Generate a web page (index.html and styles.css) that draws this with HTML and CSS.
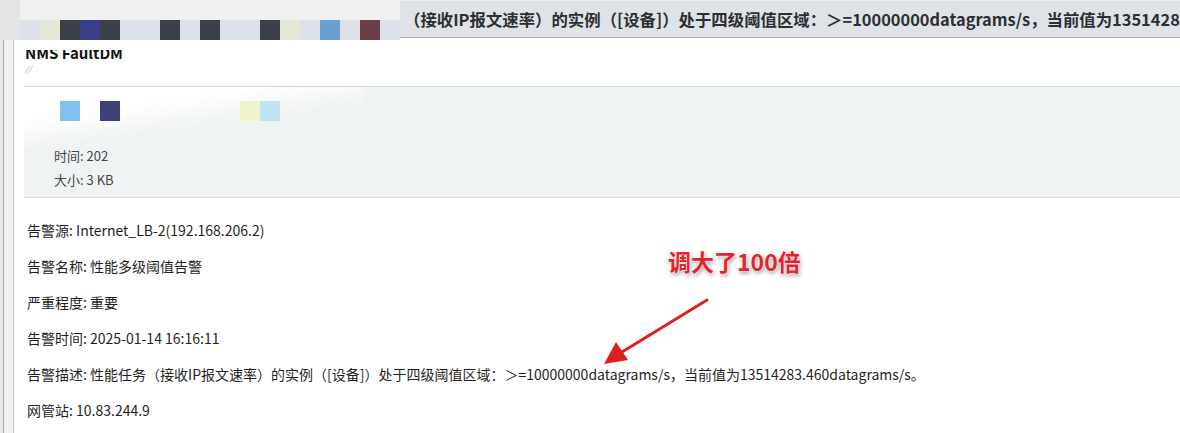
FILE: index.html
```html
<!DOCTYPE html>
<html lang="zh-CN">
<head>
    <meta charset="UTF-8">
    <meta name="viewport" content="width=device-width, initial-scale=1.0">
    <title>NMS FaultDM</title>
    <link rel="stylesheet" href="styles.css">
</head>
<body>
    <div class="topbar">
        <div class="blur">
            <div class="blur-top"></div>
            <div class="mosaic">
                <span class="c-grey"></span><span class="c-light"></span><span class="c-pale"></span>
                <span class="c-dark"></span><span class="c-navy"></span><span class="c-dark"></span>
                <span class="c-light"></span><span class="c-light"></span><span class="c-dark"></span>
                <span class="c-light"></span><span class="c-dark"></span><span class="c-light"></span>
                <span class="c-light"></span><span class="c-dark"></span><span class="c-pale"></span>
                <span class="c-light"></span><span class="c-blue"></span><span class="c-light"></span>
                <span class="c-maroon"></span><span class="c-light"></span>
            </div>
        </div>
        <div class="subject">（接收IP报文速率）的实例（[设备]）处于四级阈值区域：＞=10000000datagrams/s，当前值为13514283.460datagrams/s。</div>
    </div>

    <div class="frame">
        <div class="edge"></div>
        <div class="mail">
            <div class="mail-head">
                <div class="sender-clip">
                    <div class="sender">NMS FaultDM</div>
                </div>
                <div class="to">//</div>
            </div>

            <div class="attach">
                <div class="mosaic small">
                    <span></span><span class="c-sky"></span><span></span><span class="c-indigo"></span>
                    <span></span><span></span><span></span><span></span><span></span><span></span>
                    <span class="c-cream"></span><span class="c-ice"></span>
                </div>
                <div class="meta">时间: 202</div>
                <div class="meta">大小: 3 KB</div>
            </div>

            <div class="fields">
                <p>告警源: Internet_LB-2(192.168.206.2)</p>
                <p>告警名称: 性能多级阈值告警</p>
                <p>严重程度: 重要</p>
                <p>告警时间: 2025-01-14 16:16:11</p>
                <p>告警描述: 性能任务（接收IP报文速率）的实例（[设备]）处于四级阈值区域：＞=10000000datagrams/s，当前值为13514283.460datagrams/s。</p>
                <p>网管站: 10.83.244.9</p>
            </div>
        </div>
    </div>

    <div class="note">调大了100倍</div>
    <svg class="arrow" width="120" height="80" viewBox="0 0 120 80">
        <line x1="107" y1="8" x2="22" y2="60" stroke="#e01f1f" stroke-width="3" stroke-linecap="round"/>
        <polygon points="4,72 16,50 28,68" fill="#e01f1f"/>
    </svg>
</body>
</html>
```

FILE: styles.css
```css
body {
    margin: 0;
    font-family: "Noto Sans CJK SC", "Liberation Sans", sans-serif;
    background-color: #fff;
    color: #1f1f1f;
    overflow: hidden;
}

/* top strip */
.topbar {
    display: flex;
    align-items: flex-start;
    height: 40px;
}
.blur {
    width: 400px;
    flex: none;
}
.blur-top {
    height: 20px;
    background: linear-gradient(to right, #e4e4e4 20px, #f0f0f0 20px);
}
.mosaic {
    display: flex;
    height: 20px;
}
.mosaic span {
    width: 20px;
    flex: none;
}
.c-grey { background-color: #e2e4e6; }
.c-light { background-color: #dde2ea; }
.c-pale { background-color: #e4e8d6; }
.c-dark { background-color: #3b4049; }
.c-navy { background-color: #393d8a; }
.c-blue { background-color: #6a9fd2; }
.c-maroon { background-color: #6b3f48; }
.c-sky { background-color: #80c2ef; }
.c-indigo { background-color: #3d4178; }
.c-cream { background-color: #eff4c9; }
.c-ice { background-color: #bfe3f3; }

.subject {
    flex: 1;
    min-width: 0;
    height: 36px;
    line-height: 36px;
    padding-left: 4px;
    background-color: #dfe3e7;
    border-top: 1px solid #eceef0;
    border-bottom: 1px solid #a9adb1;
    font-size: 16.4px;
    font-weight: bold;
    color: #2b2f33;
    white-space: nowrap;
    overflow: hidden;
}

/* mail body */
.frame {
    display: flex;
    height: 393px;
}
.edge {
    width: 14px;
    flex: none;
    background: linear-gradient(to right, #e9e9e9 3px, #a9a9a9 3px, #a9a9a9 4px, #f0f0f0 4px, #f0f0f0 13px, #c4c4c4 13px);
}
.mail {
    flex: 1;
}
.mail-head {
    height: 36px;
    padding: 10px 0 0 11px;
}
.sender-clip {
    height: 12px;
    overflow: hidden;
}
.sender {
    margin-top: -7px;
    font-size: 15px;
    font-weight: bold;
    line-height: 20px;
    color: #111;
}
.to {
    margin-top: 2px;
    font-size: 8px;
    line-height: 10px;
    color: #999;
    font-style: italic;
}

.attach {
    margin-left: 10px;
    padding: 14px 0 5px 0;
    border-top: 1px solid #d4d7d7;
    border-bottom: 1px solid #d4d7d7;
    background: linear-gradient(172deg, #fff 20%, rgba(255, 255, 255, 0) 42%) 0 0 / 340px 100% no-repeat, #f0f3f3;
}
.mosaic.small {
    padding-left: 16px;
    margin-bottom: 23px;
}
.meta {
    padding-left: 30px;
    font-size: 13px;
    line-height: 24px;
    color: #444;
}

.fields {
    padding: 14px 0 0 13px;
}
.fields p {
    margin: 0;
    font-size: 14px;
    line-height: 36px;
    white-space: nowrap;
}

/* annotation */
.note {
    position: absolute;
    left: 668px;
    top: 244px;
    font-size: 23px;
    font-weight: bold;
    color: #e3242b;
    text-shadow: 0 0 2px #fff, 0 0 2px #fff, 1px 2px 4px rgba(0, 0, 0, 0.45);
}
.arrow {
    position: absolute;
    left: 600px;
    top: 292px;
}
```
